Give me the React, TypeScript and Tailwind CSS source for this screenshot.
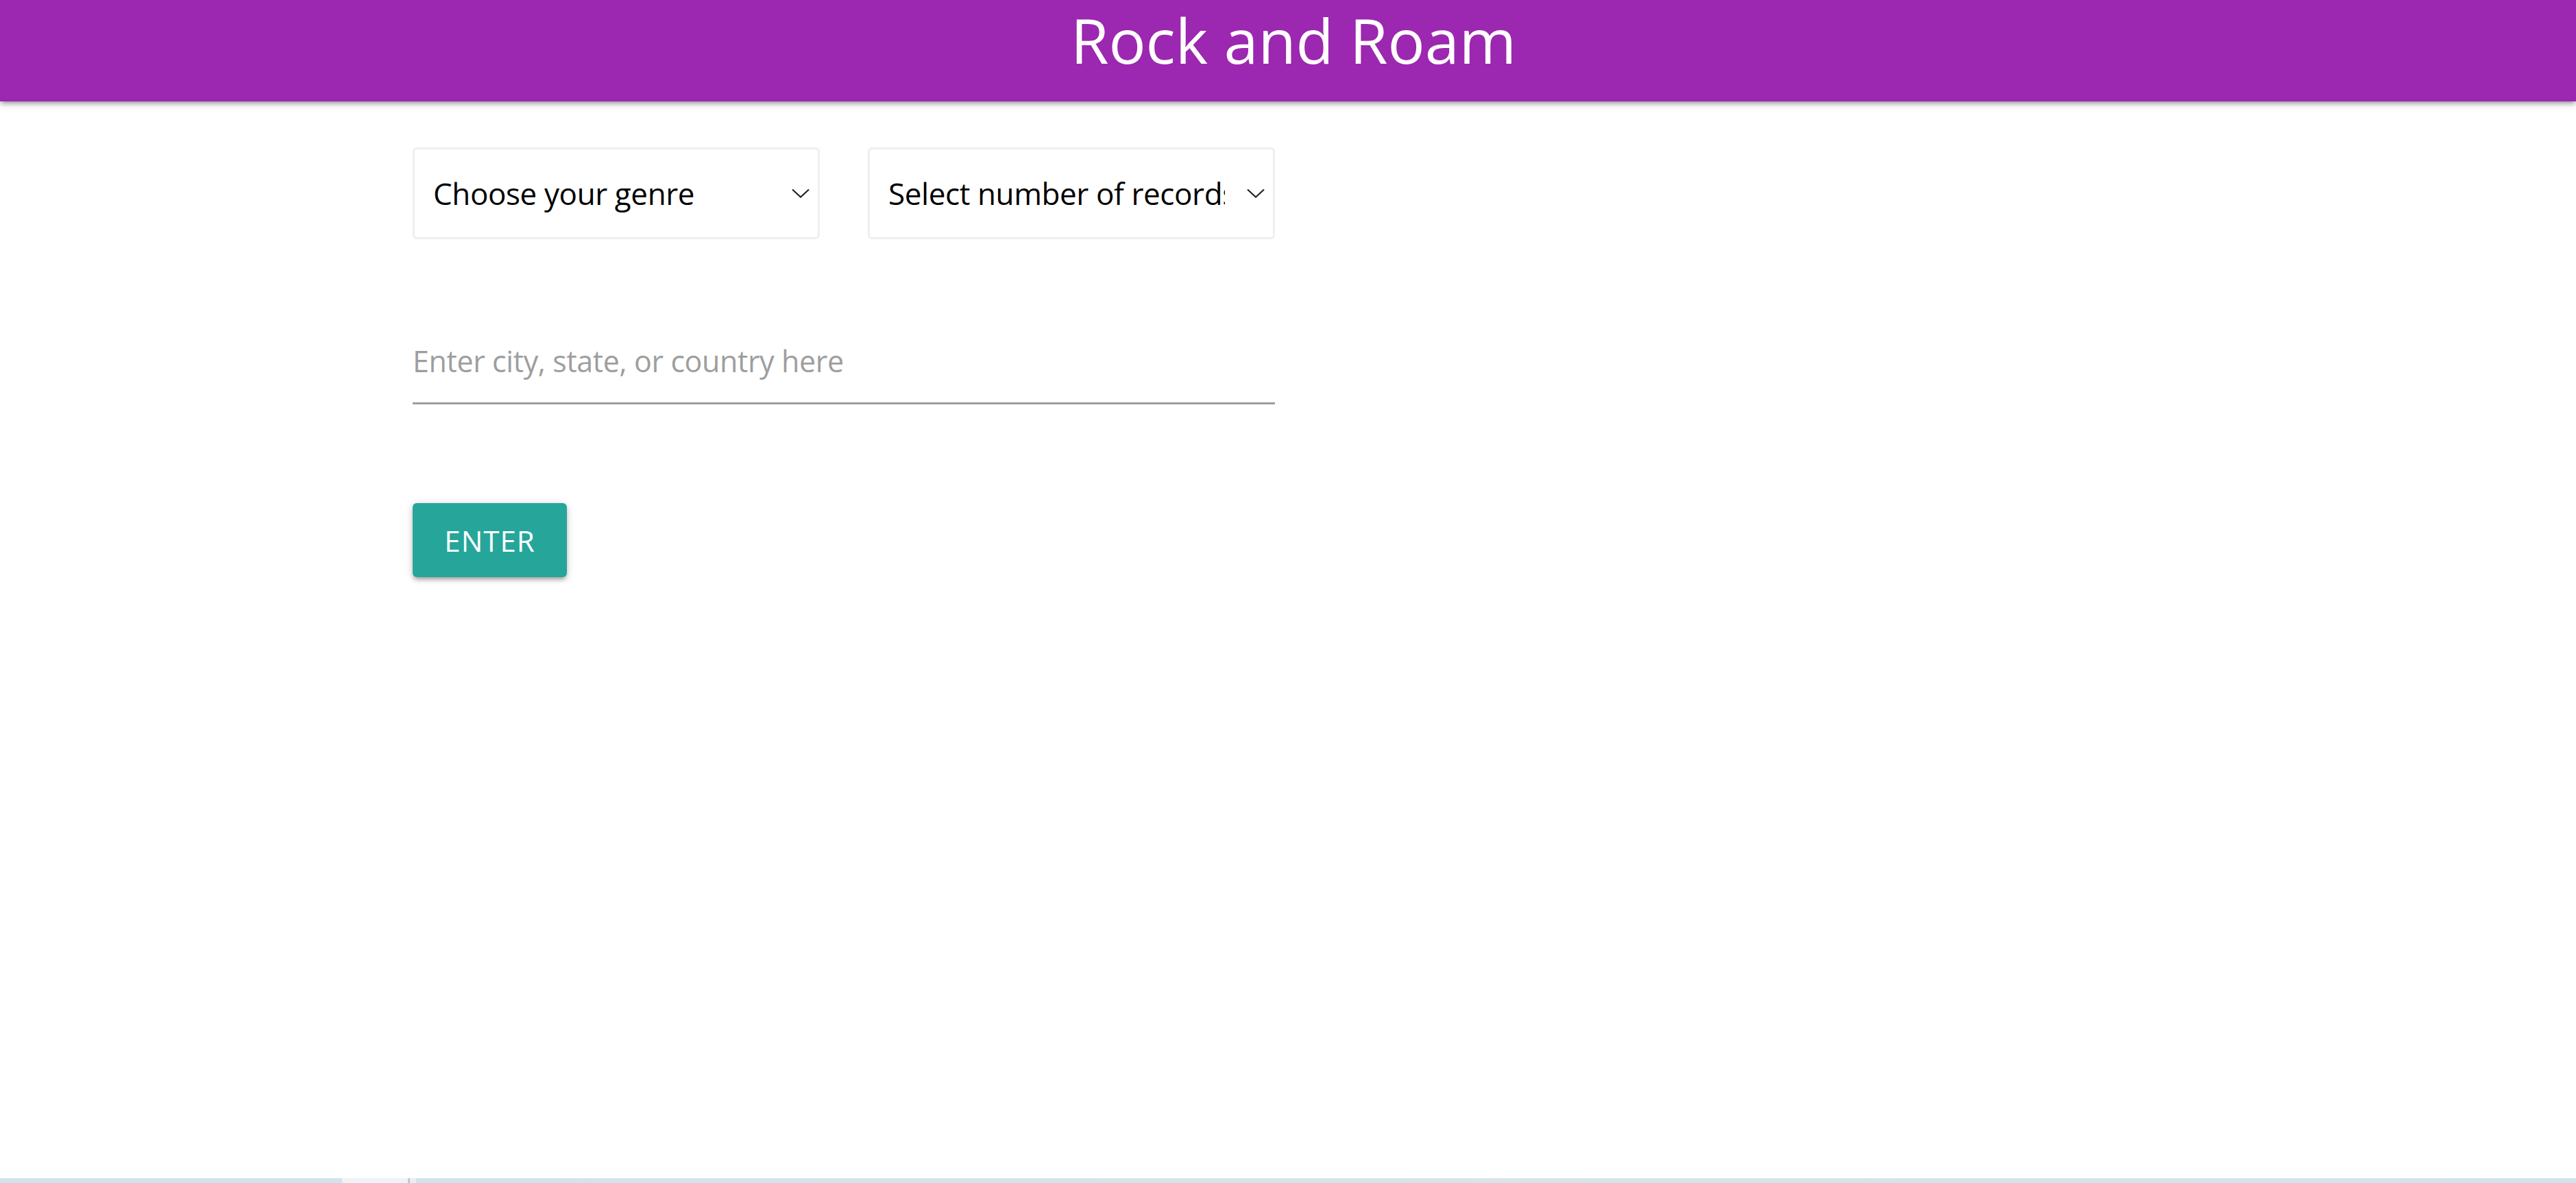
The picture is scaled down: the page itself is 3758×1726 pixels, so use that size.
import React from 'react'

const font = { fontFamily: '"Open Sans", "Noto Sans", sans-serif' }

function Chevron() {
  return (
    <svg width="26" height="14" viewBox="0 0 26 14" fill="none" className="shrink-0">
      <path d="M1 1.5 L13 12.5 L25 1.5" stroke="#222" strokeWidth="2.2" />
    </svg>
  )
}

function FakeSelect({ label }: { label: string }) {
  return (
    <div className="flex h-[134px] w-[594px] items-center rounded-[6px] border-[3px] border-[#efefef] bg-white pl-[27px] pr-[12px]">
      <span className="mr-[32px] flex-1 overflow-hidden whitespace-nowrap text-[44px] leading-[60px] tracking-[-0.4px] text-black">
        {label}
      </span>
      <Chevron />
    </div>
  )
}

export default function App() {
  return (
    <div className="flex h-[1726px] flex-col bg-white" style={font}>
      <header className="relative z-10 flex h-[148px] items-start justify-center bg-[#9c27b0] pl-[16px] shadow-[0_5px_5px_0_rgba(0,0,0,0.14),0_7px_3px_-5px_rgba(0,0,0,0.12),0_2px_12px_0_rgba(0,0,0,0.2)]">
        <h1 className="mt-[-2px] text-[90px] leading-[120px] font-normal text-white">Rock and Roam</h1>
      </header>

      <main className="flex-1 pl-[602px]">
        <div className="mt-[67px] flex gap-[70px]">
          <FakeSelect label="Choose your genre" />
          <FakeSelect label="Select number of records" />
        </div>

        <div className="mt-[147px] w-[1258px]">
          <input
            type="text"
            placeholder="Enter city, state, or country here"
            className="h-[94px] w-full border-b-[3px] border-[#9e9e9e] pb-[31px] text-[43px] leading-[60px] tracking-[-0.4px] text-black outline-none placeholder:text-[#9e9e9e]"
          />
        </div>

        <button className="mt-[144px] flex h-[108px] w-[225px] items-center justify-center rounded-[6px] bg-[#26a69a] text-[42px] tracking-[1px] text-white shadow-[0_5px_5px_0_rgba(0,0,0,0.14),0_7px_3px_-5px_rgba(0,0,0,0.12),0_2px_12px_0_rgba(0,0,0,0.2)]">
          ENTER
        </button>
      </main>

      <div className="flex h-[7px]">
        <div className="w-[499px] bg-[#d3e2ec]" />
        <div className="w-[96px] bg-[#edf3f7]" />
        <div className="w-[3px] bg-[#b9c9cf]" />
        <div className="w-[9px] bg-[#e6eef3]" />
        <div className="flex-1 bg-gradient-to-r from-[#d3e2ec] via-[#d8e4ea] to-[#d3e2ec]" />
      </div>
    </div>
  )
}
